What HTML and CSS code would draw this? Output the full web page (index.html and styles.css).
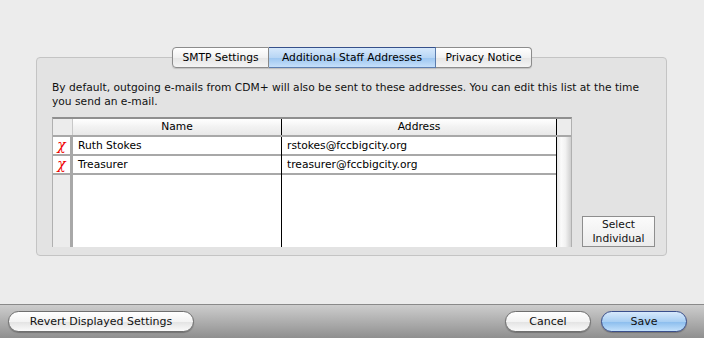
FILE: index.html
```html
<!DOCTYPE html>
<html>
<head>
<meta charset="UTF-8">
<title>Preferences</title>
<link rel="stylesheet" href="styles.css">
</head>
<body>

<div class="main">
  <div class="tabs">
    <div class="tab t1">SMTP Settings</div>
    <div class="tab t2 active">Additional Staff Addresses</div>
    <div class="tab t3">Privacy Notice</div>
  </div>

  <div class="group">
    <p class="note">By default, outgoing e-mails from CDM+ will also be sent to these addresses. You can edit this list at the time you send an e-mail.</p>

    <div class="content">
      <div class="grid">
        <div class="head">
          <div class="c-icon"></div>
          <div class="c-name">Name</div>
          <div class="c-addr">Address</div>
          <div class="c-scroll"></div>
        </div>
        <div class="body">
          <div class="col-icon">
            <div class="x">&#967;</div>
            <div class="x">&#967;</div>
          </div>
          <div class="col-name">
            <div class="row">Ruth Stokes</div>
            <div class="row">Treasurer</div>
          </div>
          <div class="col-addr">
            <div class="row">rstokes@fccbigcity.org</div>
            <div class="row">treasurer@fccbigcity.org</div>
          </div>
          <div class="col-scroll"></div>
        </div>
      </div>
      <button class="select">Select<br>Individual</button>
    </div>
  </div>
</div>

<div class="bottom-bar">
  <button class="pill revert">Revert Displayed Settings</button>
  <div class="right">
    <button class="pill cancel">Cancel</button>
    <button class="pill save">Save</button>
  </div>
</div>

</body>
</html>
```

FILE: styles.css
```css
body{margin:0;background:#ececec;font-family:"DejaVu Sans",sans-serif;font-size:10.7px;color:#000;width:704px;height:338px;overflow:hidden}
.main{height:304px;padding-top:47px;box-sizing:border-box}

.tabs{display:flex;justify-content:center;position:relative;z-index:1;margin-bottom:-11px}
.tab{height:19px;line-height:19px;text-align:center;border:1px solid #8c8c8c;border-left:none;
 background:linear-gradient(#ffffff,#f1f1f1 50%,#e6e6e6 55%,#f4f4f4);box-shadow:0 1px 1px rgba(0,0,0,.15)}
.tab.t1{width:95px;border-left:1px solid #8c8c8c;border-radius:4px 0 0 4px}
.tab.t2{width:166px}
.tab.t3{width:95px;border-radius:0 4px 4px 0}
.tab.active{background:linear-gradient(#d6e8fb,#b8d6f5 50%,#9ec7f1 55%,#c6e0fa);border-color:#5d7fb1;border-top-color:#36508a}

.group{margin:0 37px 0 36px;height:199px;box-sizing:border-box;border:1px solid #c4c4c4;border-radius:4px;background:#e3e3e3;padding:23px 11px 10px 15px}
.note{margin:0;line-height:14px;color:#111;width:610px}

.content{display:flex;align-items:flex-end;gap:10px;margin-top:8px}
.grid{width:520px;flex:none;height:130px;box-sizing:border-box;border-top:2px solid #8f8f8f;border-left:1px solid #b0b0b0;border-right:1px solid #b0b0b0;display:flex;flex-direction:column;background:#fff}
.head{display:flex;height:16px;flex:none;border-bottom:2px solid #a8a8a8;background:linear-gradient(#ffffff,#f2f2f2 50%,#e8e8e8)}
.head div{line-height:16px;text-align:center}
.c-icon{width:19px;border-right:1px solid #c8c8c8;background:#ececec}
.c-name{width:208px;border-right:1px solid #000}
.c-addr{width:274px;border-right:1px solid #000}
.c-scroll{flex:1;background:#ececec}

.body{display:flex;flex:1}
.col-icon{width:17px;background:#ececec;border-right:3px solid #a8a8a8}
.x{height:17px;border-bottom:2px solid #a8a8a8;color:#e00;font-family:"DejaVu Serif",serif;font-style:italic;font-size:14px;line-height:16px;text-align:center;background:#fff}
.col-name{width:208px;border-right:1px solid #000}
.col-addr{width:274px;border-right:1px solid #000}
.row{height:17px;line-height:17px;border-bottom:2px solid #a8a8a8;padding-left:5px}
.col-scroll{flex:1;background:linear-gradient(90deg,#e6e6e6,#fbfbfb 30%,#f2f2f2 60%,#cfcfcf)}

.select{width:73px;height:31px;flex:none;padding:0;font:inherit;line-height:14px;color:#111;border:1px solid #8e8e8e;background:linear-gradient(#fbfbfb,#ececec);border-radius:0}

.bottom-bar{height:34px;box-sizing:border-box;border-top:1px solid #8a8a8a;background:linear-gradient(#cdcdcd,#a8a8a8 60%,#8f8f8f);display:flex;justify-content:space-between;align-items:flex-start;padding:6px 17px 0 8px}
.right{display:flex;gap:10px}
.pill{height:21px;padding:0;font:inherit;font-size:11px;color:#111;border:1px solid #6f6f6f;border-radius:11px;
 background:linear-gradient(#ffffff,#f3f3f3 50%,#e4e4e4 55%,#fafafa);box-shadow:0 1px 1px rgba(0,0,0,.25)}
.revert{width:186px}
.cancel{width:86px}
.save{width:86px;border-color:#3a4f8c;background:linear-gradient(#d7e9fc,#a9cff3 50%,#8ebfee 55%,#c2e0fb)}
```
